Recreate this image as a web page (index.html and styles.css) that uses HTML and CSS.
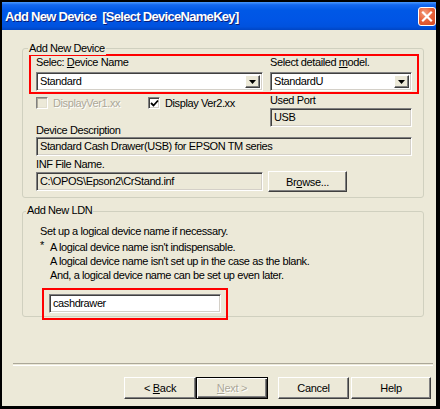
FILE: index.html
```html
<!DOCTYPE html>
<html>
<head>
<meta charset="utf-8">
<link rel="stylesheet" href="styles.css">
</head>
<body>
<div class="window">
  <div class="titlebar">
    <span class="title">Add New Device  [Select DeviceNameKey]</span>
    <span class="close"><svg width="18" height="19" viewBox="0 0 18 19"><path d="M5 5.5 L13 13.5 M13 5.5 L5 13.5" stroke="#fff" stroke-width="2.2" stroke-linecap="square"/></svg></span>
  </div>
  <div class="content">
    <div class="group g1">
      <span class="legend">Add New Device</span>
      <div class="redbox r1">
        <div class="col c1">
          <div class="lbl tight">Selec: <u>D</u>evice Name</div>
          <div class="combo"><span class="ctext">Standard</span><span class="dd"><svg width="7" height="4" viewBox="0 0 7 4"><path d="M0 0H7L3.5 4Z" fill="#000"/></svg></span></div>
        </div>
        <div class="col c2">
          <div class="lbl tight">Select detailed <u>m</u>odel.</div>
          <div class="combo"><span class="ctext">StandardU</span><span class="dd"><svg width="7" height="4" viewBox="0 0 7 4"><path d="M0 0H7L3.5 4Z" fill="#000"/></svg></span></div>
        </div>
      </div>
      <div class="row2">
        <div class="left">
          <div class="checks">
            <span class="check dis"></span><span class="ctl dis-text">DisplayVer1.xx</span>
            <span class="check on"><svg width="9" height="9" viewBox="0 0 9 9"><path d="M1 4 L3.5 6.5 L8 1.5" stroke="#000" stroke-width="1.8" fill="none"/></svg></span><span class="ctl">Display Ver2.xx</span>
          </div>
          <div class="lbl">Device Description</div>
        </div>
        <div class="right">
          <div class="lbl tight">Used Port</div>
          <div class="field port">USB</div>
        </div>
      </div>
      <div class="field desc">Standard Cash Drawer(USB) for EPSON TM series</div>
      <div class="lbl inflbl">INF File Name.</div>
      <div class="infrow">
        <div class="field inf">C:\OPOS\Epson2\CrStand.inf</div>
        <button class="btn browse">Br<u>o</u>wse...</button>
      </div>
    </div>

    <div class="group g2">
      <span class="legend l2">Add New LDN</span>
      <div class="line">Set up a logical device name if necessary.</div>
      <div class="note">
        <span class="star">*</span>
        <div class="notelines">
          <div class="line">A logical device name isn't indispensable.</div>
          <div class="line">A logical device name isn't set up in the case as the blank.</div>
          <div class="line">And, a logical device name can be set up even later.</div>
        </div>
      </div>
      <div class="redbox r2">
        <div class="input">cashdrawer</div>
      </div>
    </div>

    <div class="sep"></div>

    <div class="buttons">
      <button class="btn wz back">&lt; <u>B</u>ack</button>
      <button class="btn wz next" disabled><u>N</u>ext &gt;</button>
      <button class="btn cancel">Cancel</button>
      <button class="btn help">Help</button>
    </div>
  </div>
</div>
</body>
</html>
```

FILE: styles.css
```css
body {
  margin: 0;
  font-family: "Liberation Sans", Arial, sans-serif;
  font-size: 11px;
  letter-spacing: -0.4px;
  color: #000;
  background: #fff;
}

.window {
  width: 440px;
  height: 409px;
  box-sizing: border-box;
  border: 2px solid #000;
  border-right-width: 4px;
  border-bottom-width: 3px;
  background: #ECE9D8;
  display: flex;
  flex-direction: column;
  overflow: hidden;
}

.titlebar {
  height: 28px;
  flex: none;
  display: flex;
  align-items: center;
  justify-content: space-between;
  padding-left: 3px;
  background: linear-gradient(#4A9AFF 0%, #1468F0 10%, #0058E6 30%, #0055E5 65%, #0052DE 88%, #0045C4 100%);
  color: #fff;
}

.title {
  font-weight: bold;
  font-size: 13px;
  letter-spacing: -0.7px;
  white-space: pre;
  text-shadow: 1px 1px 0 #0A1E78;
}

.close {
  width: 18px;
  height: 19px;
  box-sizing: border-box;
  border: 1px solid #fff;
  border-radius: 3px;
  background: radial-gradient(circle at 35% 30%, #F4A080 0%, #E8643C 45%, #D4461E 100%);
  display: flex;
  align-items: center;
  justify-content: center;
}

.close svg { display: block; margin: -1px; }

.content {
  flex: 1;
  padding-top: 18px;
}

.group {
  position: relative;
  margin-left: 20px;
  width: 402px;
  box-sizing: border-box;
  border: 1px solid #D0D0BF;
  border-radius: 3px;
}

.legend {
  position: absolute;
  top: -8px;
  left: 5px;
  padding: 0 1px;
  line-height: 14px;
  background: #ECE9D8;
}

.g1 {
  height: 150px;
  padding-left: 6px;
}

.redbox {
  border: 2px solid #F00;
  box-sizing: border-box;
}

.r1 {
  margin-top: 5px;
  width: 390px;
  height: 40px;
  display: flex;
  gap: 7px;
  padding-left: 5px;
}

.col {
  display: flex;
  flex-direction: column;
}

.c1 { width: 227px; }
.c2 { width: 142px; }

.lbl {
  line-height: 14px;
  white-space: nowrap;
}

.lbl.tight { line-height: 13px; }

.combo {
  margin-top: 3px;
  height: 19px;
  box-sizing: border-box;
  background: #fff;
  border: 1px solid;
  border-color: #808080 #fff #fff #808080;
  box-shadow: inset 1px 1px 0 #404040, inset -1px -1px 0 #D4D0C8;
  display: flex;
  align-items: center;
  justify-content: space-between;
  padding: 2px 2px 2px 3px;
}

.ctext { line-height: 13px; }

.dd {
  width: 15px;
  height: 13px;
  box-sizing: border-box;
  background: #ECE9D8;
  border: 1px solid;
  border-color: #fff #404040 #404040 #fff;
  box-shadow: inset -1px -1px 0 #808080;
  display: flex;
  align-items: center;
  justify-content: center;
}

.dd svg { display: block; }

.row2 {
  margin-left: 7px;
  height: 43px;
  display: flex;
  gap: 7px;
}

.left {
  width: 227px;
  display: flex;
  flex-direction: column;
  justify-content: space-between;
}

.right {
  width: 142px;
  display: flex;
  flex-direction: column;
}

.right .lbl { line-height: 12px; }

.checks {
  margin-top: 3px;
  height: 14px;
  display: flex;
  align-items: flex-start;
}

.check {
  width: 12px;
  height: 12px;
  box-sizing: border-box;
  border: 1px solid;
  border-color: #808080 #fff #fff #808080;
  box-shadow: inset 1px 1px 0 #404040, inset -1px -1px 0 #D4D0C8;
  display: flex;
  align-items: center;
  justify-content: center;
  flex: none;
}

.check.dis {
  background: #ECE9D8;
  box-shadow: inset 1px 1px 0 #ACA899, inset -1px -1px 0 #E2DFD0;
}

.check.on { background: #fff; }

.ctl {
  line-height: 14px;
  margin-left: 5px;
  margin-top: -1px;
}

.dis-text {
  color: #ACA899;
  text-shadow: 1px 1px 0 #fff;
  width: 95px;
}

.field {
  height: 19px;
  box-sizing: border-box;
  border: 1px solid;
  border-color: #808080 #fff #fff #808080;
  box-shadow: inset 1px 1px 0 #404040, inset -1px -1px 0 #D4D0C8;
  background: #ECE9D8;
  padding: 0 3px;
  line-height: 17px;
  white-space: nowrap;
}

.port { margin-top: 2px; }

.desc {
  margin-left: 7px;
  width: 376px;
}

.inflbl {
  margin-left: 7px;
  margin-top: 1px;
}

.infrow {
  margin-left: 7px;
  height: 21px;
  display: flex;
  align-items: center;
  gap: 5px;
}

.inf { width: 227px; }

.btn {
  font-family: inherit;
  font-size: 11px;
  letter-spacing: -0.3px;
  color: #000;
  background: #ECE9D8;
  box-sizing: border-box;
  border: 1px solid;
  border-color: #fff #404040 #404040 #fff;
  box-shadow: inset -1px -1px 0 #808080;
  padding: 0;
  margin: 0;
}

.browse {
  width: 79px;
  height: 21px;
}

.g2 {
  margin-top: 13px;
  padding: 12px 0 0 17px;
}

.l2 {
  left: 3px;
  top: -9px;
}

.line {
  line-height: 14px;
  white-space: nowrap;
}

.note {
  margin-top: 2px;
  display: flex;
}

.star {
  width: 10px;
  line-height: 11px;
}

.r2 {
  margin: 6px 0 -4px 2px;
  width: 186px;
  height: 32px;
  padding: 4px 0 0 5px;
}

.input {
  width: 172px;
  height: 19px;
  box-sizing: border-box;
  border: 1px solid;
  border-color: #808080 #fff #fff #808080;
  box-shadow: inset 1px 1px 0 #404040, inset -1px -1px 0 #D4D0C8;
  background: #fff;
  padding: 0 3px;
  line-height: 17px;
}

.sep {
  margin: 46px 0 0 11px;
  width: 420px;
  height: 1px;
  border-top: 1px solid #ACA899;
  border-bottom: 1px solid #fff;
}

.buttons {
  margin: 11px 0 0 122px;
  display: flex;
}

.buttons .btn { height: 22px; }

.back { width: 72px; }

.next {
  width: 72px;
  color: #ACA899;
  text-shadow: 1px 1px 0 #fff;
  border: 1px solid #000;
  box-shadow: inset 1px 1px 0 #fff, inset -1px -1px 0 #404040, inset -2px -2px 0 #808080;
}

.cancel { width: 71px; margin-left: 10px; }
.help { width: 80px; margin-left: 2px; }
```
